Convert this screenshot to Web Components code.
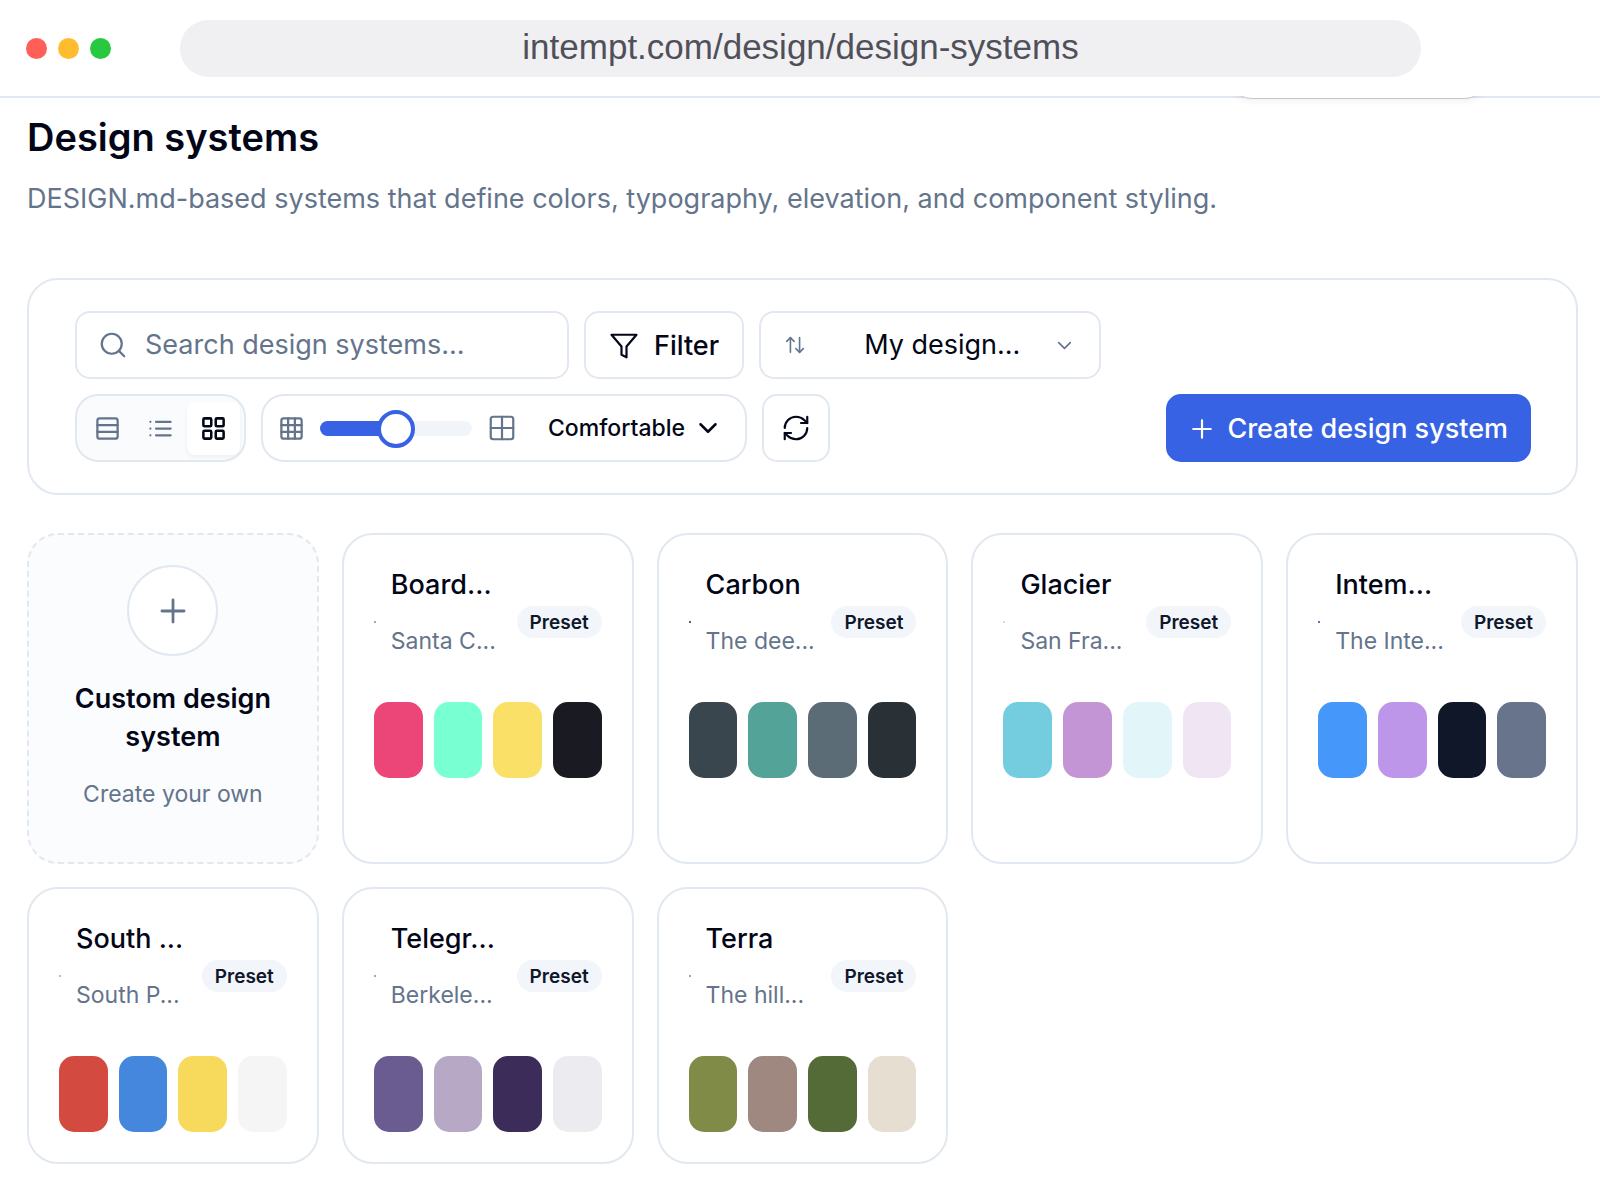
<!DOCTYPE html>
<html lang="en">
<head>
<meta charset="UTF-8">
<meta name="viewport" content="width=device-width, initial-scale=1.0">
<title>Design systems</title>
<style>
  :root {
    --ink: #020617;
    --muted: #64748b;
    --line: #e2e8f0;
    --soft: #f1f5f9;
    --primary: #3662e3;
  }
  body {
    margin: 0;
    background: #fff;
    color: var(--ink);
    font-family: Inter, sans-serif;
    font-size: 27px;
  }
  main {
    display: flex;
    flex-direction: column;
    gap: 38px;
    padding: 16px 22px 34px 27px;
  }
</style>
</head>
<body>
  <browser-bar url="intempt.com/design/design-systems"></browser-bar>
  <main>
    <page-header>
      <span slot="title">Design systems</span>
      <span slot="subtitle">DESIGN.md-based systems that define colors, typography, elevation, and component styling.</span>
    </page-header>
    <design-toolbar></design-toolbar>
    <card-grid>
      <create-card>
        <span slot="title">Custom design system</span>
        <span slot="note">Create your own</span>
      </create-card>
      <system-card colors="#ec4678 #78ffd2 #fbe067 #1a1a22" mark="#b0a890">
        <span slot="title">Board...</span>
        <span slot="note">Santa C...</span>
      </system-card>
      <system-card colors="#39464d #53a398 #5b6c77 #293137" mark="#53646d">
        <span slot="title">Carbon</span>
        <span slot="note">The dee...</span>
      </system-card>
      <system-card colors="#74ccdf #c495d4 #e2f5f9 #f0e5f3" mark="#dcd6ea">
        <span slot="title">Glacier</span>
        <span slot="note">San Fra...</span>
      </system-card>
      <system-card colors="#4597f9 #bd96e9 #0f1729 #67748b" mark="#6a6fb0">
        <span slot="title">Intem...</span>
        <span slot="note">The Inte...</span>
      </system-card>
      <system-card colors="#d24a40 #4487dd #f7da5b #f5f5f5" mark="#c9b2bd">
        <span slot="title">South ...</span>
        <span slot="note">South P...</span>
      </system-card>
      <system-card colors="#6a5c90 #b7a9c6 #3b2c59 #ecebef" mark="#a9a2bb">
        <span slot="title">Telegr...</span>
        <span slot="note">Berkele...</span>
      </system-card>
      <system-card colors="#7f8b47 #9e887f #546b37 #e6ded1" mark="#a9a68f">
        <span slot="title">Terra</span>
        <span slot="note">The hill...</span>
      </system-card>
    </card-grid>
  </main>

<script>
const ICONS = {
  search: '<circle cx="11" cy="11" r="8"/><path d="m21 21-4.3-4.3"/>',
  filter: '<polygon points="22 3 2 3 10 12.46 10 19 14 21 14 12.46 22 3"/>',
  sort: '<path d="m21 16-4 4-4-4"/><path d="M17 20V4"/><path d="m3 8 4-4 4 4"/><path d="M7 4v16"/>',
  chevron: '<path d="m6 9 6 6 6-6"/>',
  rows: '<rect width="18" height="18" x="3" y="3" rx="2"/><path d="M21 9H3"/><path d="M21 15H3"/>',
  list: '<path d="M3 6h.01M3 12h.01M3 18h.01M8 6h13M8 12h13M8 18h13"/>',
  tiles: '<rect width="7" height="7" x="3" y="3" rx="1"/><rect width="7" height="7" x="14" y="3" rx="1"/><rect width="7" height="7" x="14" y="14" rx="1"/><rect width="7" height="7" x="3" y="14" rx="1"/>',
  grid3: '<rect width="18" height="18" x="3" y="3" rx="2"/><path d="M3 9h18M3 15h18M9 3v18M15 3v18"/>',
  grid2: '<rect width="18" height="18" x="3" y="3" rx="2"/><path d="M3 12h18M12 3v18"/>',
  refresh: '<path d="M3 12a9 9 0 0 1 9-9 9.75 9.75 0 0 1 6.74 2.74L21 8"/><path d="M21 3v5h-5"/><path d="M21 12a9 9 0 0 1-9 9 9.75 9.75 0 0 1-6.74-2.74L3 16"/><path d="M8 16H3v5"/>',
  plus: '<path d="M5 12h14M12 5v14"/>'
};

class DsIcon extends HTMLElement {
  connectedCallback() {
    const size = this.getAttribute('size') || 30;
    const stroke = this.getAttribute('stroke') || 1.75;
    this.attachShadow({ mode: 'open' });
    this.shadowRoot.innerHTML = `
      <style>
        :host { display: block; flex: none; }
        svg { display: block; }
      </style>
      <svg width="${size}" height="${size}" viewBox="0 0 24 24" fill="none" stroke="currentColor"
        stroke-width="${stroke}" stroke-linecap="round" stroke-linejoin="round" aria-hidden="true">
        ${ICONS[this.getAttribute('name')]}
      </svg>
    `;
  }
}

class BrowserBar extends HTMLElement {
  connectedCallback() {
    this.attachShadow({ mode: 'open' });
    this.shadowRoot.innerHTML = `
      <style>
        :host {
          display: grid;
          grid-template-columns: 180px 1fr 179px;
          align-items: center;
          box-sizing: border-box;
          height: 98px;
          padding-top: 1px;
          border-bottom: 2px solid var(--line);
          position: relative;
        }
        .lights { display: flex; gap: 11px; padding-left: 26px; }
        .lights span { width: 21px; height: 21px; border-radius: 50%; }
        input {
          box-sizing: border-box;
          width: 100%;
          height: 57px;
          border: 0;
          border-radius: 29px;
          padding: 0 0 4px;
          background: #f0f0f2;
          color: #50505a;
          font: 35px "Liberation Sans", sans-serif;
          text-align: center;
        }
        /* lower edge of the floating panel tucked behind the bar */
        .peek {
          position: absolute;
          top: 96px;
          right: 106px;
          width: 272px;
          height: 12px;
          overflow: hidden;
        }
        .peek::before {
          content: '';
          position: absolute;
          left: 4px;
          right: 4px;
          bottom: 9px;
          height: 60px;
          box-sizing: border-box;
          background: #fff;
          border: 1px solid #c4c6ca;
          border-radius: 26px;
          box-shadow: 0 3px 6px rgba(0, 0, 0, 0.05);
        }
      </style>
      <div class="lights">
        <span style="background:#ff5f57"></span>
        <span style="background:#febc2e"></span>
        <span style="background:#28c840"></span>
      </div>
      <input type="text" aria-label="Address" value="${this.getAttribute('url')}" readonly>
      <div class="peek"></div>
    `;
  }
}

class PageHeader extends HTMLElement {
  connectedCallback() {
    this.attachShadow({ mode: 'open' });
    this.shadowRoot.innerHTML = `
      <style>
        :host { display: block; margin-bottom: 21px; }
        h1 { margin: 0 0 19px; font-size: 38px; line-height: 46px; font-weight: 600; }
        p { margin: 0; line-height: 40px; color: var(--muted); }
      </style>
      <h1><slot name="title"></slot></h1>
      <p><slot name="subtitle"></slot></p>
    `;
  }
}

class ViewToggle extends HTMLElement {
  connectedCallback() {
    this.attachShadow({ mode: 'open' });
    this.shadowRoot.innerHTML = `
      <style>
        :host {
          display: flex;
          align-items: center;
          box-sizing: border-box;
          height: 68px;
          padding: 0 4px;
          border: 2px solid var(--line);
          border-radius: 23px;
          background: #f9fbfd;
          overflow: hidden;
        }
        button {
          display: grid;
          place-items: center;
          width: 53px;
          height: 53px;
          padding: 0;
          border: 0;
          border-radius: 8px;
          background: none;
          color: var(--muted);
        }
        button[aria-pressed="true"] {
          background: #fff;
          color: var(--ink);
          box-shadow: 0 2px 4px rgba(0, 0, 0, 0.05);
        }
      </style>
      <button type="button" aria-label="Rows" aria-pressed="false"><ds-icon name="rows" size="27" stroke="2"></ds-icon></button>
      <button type="button" aria-label="List" aria-pressed="false"><ds-icon name="list" size="27" stroke="2"></ds-icon></button>
      <button type="button" aria-label="Grid" aria-pressed="true"><ds-icon name="tiles" size="27" stroke="2.25"></ds-icon></button>
    `;
    const buttons = this.shadowRoot.querySelectorAll('button');
    buttons.forEach(btn => btn.addEventListener('click', () => {
      buttons.forEach(b => b.setAttribute('aria-pressed', b === btn));
    }));
  }
}

class DensityControl extends HTMLElement {
  connectedCallback() {
    this.attachShadow({ mode: 'open' });
    this.shadowRoot.innerHTML = `
      <style>
        :host {
          display: flex;
          align-items: center;
          gap: 15px;
          box-sizing: border-box;
          height: 68px;
          padding: 0 22px 0 15px;
          border: 2px solid var(--line);
          border-radius: 23px;
          color: var(--muted);
        }
        input {
          --fill: 50%;
          appearance: none;
          -webkit-appearance: none;
          width: 152px;
          height: 38px;
          margin: 0;
          background: none;
        }
        input::-webkit-slider-runnable-track {
          height: 15px;
          border-radius: 8px;
          background: linear-gradient(to right, var(--primary) var(--fill), var(--soft) var(--fill));
        }
        input::-webkit-slider-thumb {
          -webkit-appearance: none;
          box-sizing: border-box;
          width: 38px;
          height: 38px;
          margin-top: -11px;
          border: 4px solid var(--primary);
          border-radius: 50%;
          background: #fff;
        }
        .density {
          display: flex;
          align-items: center;
          gap: 7px;
          margin-left: 16px;
          color: var(--ink);
        }
        select {
          appearance: none;
          -webkit-appearance: none;
          padding: 0;
          border: 0;
          background: none;
          color: inherit;
          font: 500 23px/30px Inter, sans-serif;
        }
      </style>
      <ds-icon name="grid3" size="27" stroke="2"></ds-icon>
      <input type="range" min="0" max="100" value="50" aria-label="Card size">
      <ds-icon name="grid2"></ds-icon>
      <div class="density">
        <select aria-label="Density"><option>Comfortable</option></select>
        <ds-icon name="chevron" stroke="2"></ds-icon>
      </div>
    `;
    const range = this.shadowRoot.querySelector('input');
    range.addEventListener('input', () => range.style.setProperty('--fill', range.value + '%'));
  }
}

class DesignToolbar extends HTMLElement {
  connectedCallback() {
    this.attachShadow({ mode: 'open' });
    this.shadowRoot.innerHTML = `
      <style>
        :host {
          display: flex;
          flex-direction: column;
          gap: 15px;
          padding: 31px 45px 31px 46px;
          border: 2px solid var(--line);
          border-radius: 31px;
        }
        .row { display: flex; flex-wrap: wrap; gap: 15px; }
        .field, button {
          display: flex;
          align-items: center;
          box-sizing: border-box;
          height: 68px;
          border: 2px solid var(--line);
          border-radius: 15px;
          background: #fff;
        }
        button, input, select {
          color: var(--ink);
          font: 500 27px/38px Inter, sans-serif;
        }
        input, select {
          flex: 1;
          min-width: 0;
          padding: 0;
          border: 0;
          outline: 0;
          background: none;
          appearance: none;
          -webkit-appearance: none;
        }
        .search { gap: 17px; width: 494px; padding: 0 21px; color: var(--muted); }
        .search input { font-weight: 400; }
        .search input::placeholder { color: var(--muted); opacity: 1; }
        .filter { gap: 15px; padding: 1px 23px 0; }
        .sort { width: 342px; padding: 0 23px; color: var(--muted); }
        .sort select { padding-left: 58px; font-weight: 400; }
        .refresh { justify-content: center; width: 68px; padding: 0; }
        .create {
          gap: 10px;
          margin-left: auto;
          padding: 1px 21px 0 19px;
          border-color: var(--primary);
          background: var(--primary);
          color: #fff;
        }
      </style>
      <div class="row">
        <label class="field search">
          <ds-icon name="search"></ds-icon>
          <input type="text" placeholder="Search design systems..." aria-label="Search design systems">
        </label>
        <button type="button" class="filter"><ds-icon name="filter"></ds-icon>Filter</button>
        <label class="field sort">
          <ds-icon name="sort" size="22"></ds-icon>
          <select aria-label="Sort"><option>My design...</option></select>
          <ds-icon name="chevron" size="23"></ds-icon>
        </label>
      </div>
      <div class="row">
        <view-toggle></view-toggle>
        <density-control></density-control>
        <button type="button" class="refresh" aria-label="Refresh"><ds-icon name="refresh"></ds-icon></button>
        <button type="button" class="create"><ds-icon name="plus"></ds-icon>Create design system</button>
      </div>
    `;
  }
}

class CardGrid extends HTMLElement {
  connectedCallback() {
    this.attachShadow({ mode: 'open' });
    this.shadowRoot.innerHTML = `
      <style>
        :host {
          display: grid;
          grid-template-columns: repeat(auto-fill, minmax(270px, 1fr));
          gap: 23px;
        }
      </style>
      <slot></slot>
    `;
  }
}

class CreateCard extends HTMLElement {
  connectedCallback() {
    this.attachShadow({ mode: 'open' });
    this.shadowRoot.innerHTML = `
      <style>
        :host { display: block; }
        button {
          display: flex;
          flex-direction: column;
          align-items: center;
          gap: 24px;
          box-sizing: border-box;
          width: 100%;
          padding: 30px 30px 54px;
          border: 2px dashed var(--line);
          border-radius: 31px;
          background: #fbfcfe;
          color: var(--ink);
          font: 600 27px/38px Inter, sans-serif;
          text-align: center;
        }
        .plus {
          display: grid;
          place-items: center;
          box-sizing: border-box;
          width: 91px;
          height: 91px;
          border: 2px solid var(--line);
          border-radius: 50%;
          background: #fff;
          color: var(--muted);
        }
        .note { color: var(--muted); font-size: 23px; line-height: 28px; font-weight: 400; }
      </style>
      <button type="button">
        <span class="plus"><ds-icon name="plus" size="38"></ds-icon></span>
        <slot name="title"></slot>
        <span class="note"><slot name="note"></slot></span>
      </button>
    `;
  }
}

class SystemCard extends HTMLElement {
  connectedCallback() {
    const swatches = this.getAttribute('colors').split(' ')
      .map(color => `<li style="background:${color}"></li>`).join('');
    this.attachShadow({ mode: 'open' });
    this.shadowRoot.innerHTML = `
      <style>
        :host {
          display: flex;
          flex-direction: column;
          gap: 23px;
          padding: 30px;
          border: 2px solid var(--line);
          border-radius: 31px;
        }
        header { display: flex; align-items: center; gap: 15px; }
        .mark { flex: none; width: 2px; height: 2px; background: ${this.getAttribute('mark')}; }
        .text { flex: 1; min-width: 0; padding-bottom: 22px; white-space: nowrap; }
        h2 { margin: 0 0 20px; font-size: 27px; line-height: 40px; font-weight: 500; }
        p { margin: 0; color: var(--muted); font-size: 23px; line-height: 32px; }
        .badge {
          padding: 1px 13px 0;
          border-radius: 16px;
          background: #f2f5fa;
          color: #0f172a;
          font-size: 19px;
          line-height: 31px;
          font-weight: 600;
        }
        ul { display: flex; gap: 11px; margin: 0; padding: 0; list-style: none; }
        li { flex: 1; height: 76px; border-radius: 15px; }
      </style>
      <header>
        <span class="mark"></span>
        <div class="text">
          <h2><slot name="title"></slot></h2>
          <p><slot name="note"></slot></p>
        </div>
        <span class="badge">Preset</span>
      </header>
      <ul aria-label="Palette">${swatches}</ul>
    `;
  }
}

customElements.define('ds-icon', DsIcon);
customElements.define('browser-bar', BrowserBar);
customElements.define('page-header', PageHeader);
customElements.define('view-toggle', ViewToggle);
customElements.define('density-control', DensityControl);
customElements.define('design-toolbar', DesignToolbar);
customElements.define('card-grid', CardGrid);
customElements.define('create-card', CreateCard);
customElements.define('system-card', SystemCard);
</script>
</body>
</html>
